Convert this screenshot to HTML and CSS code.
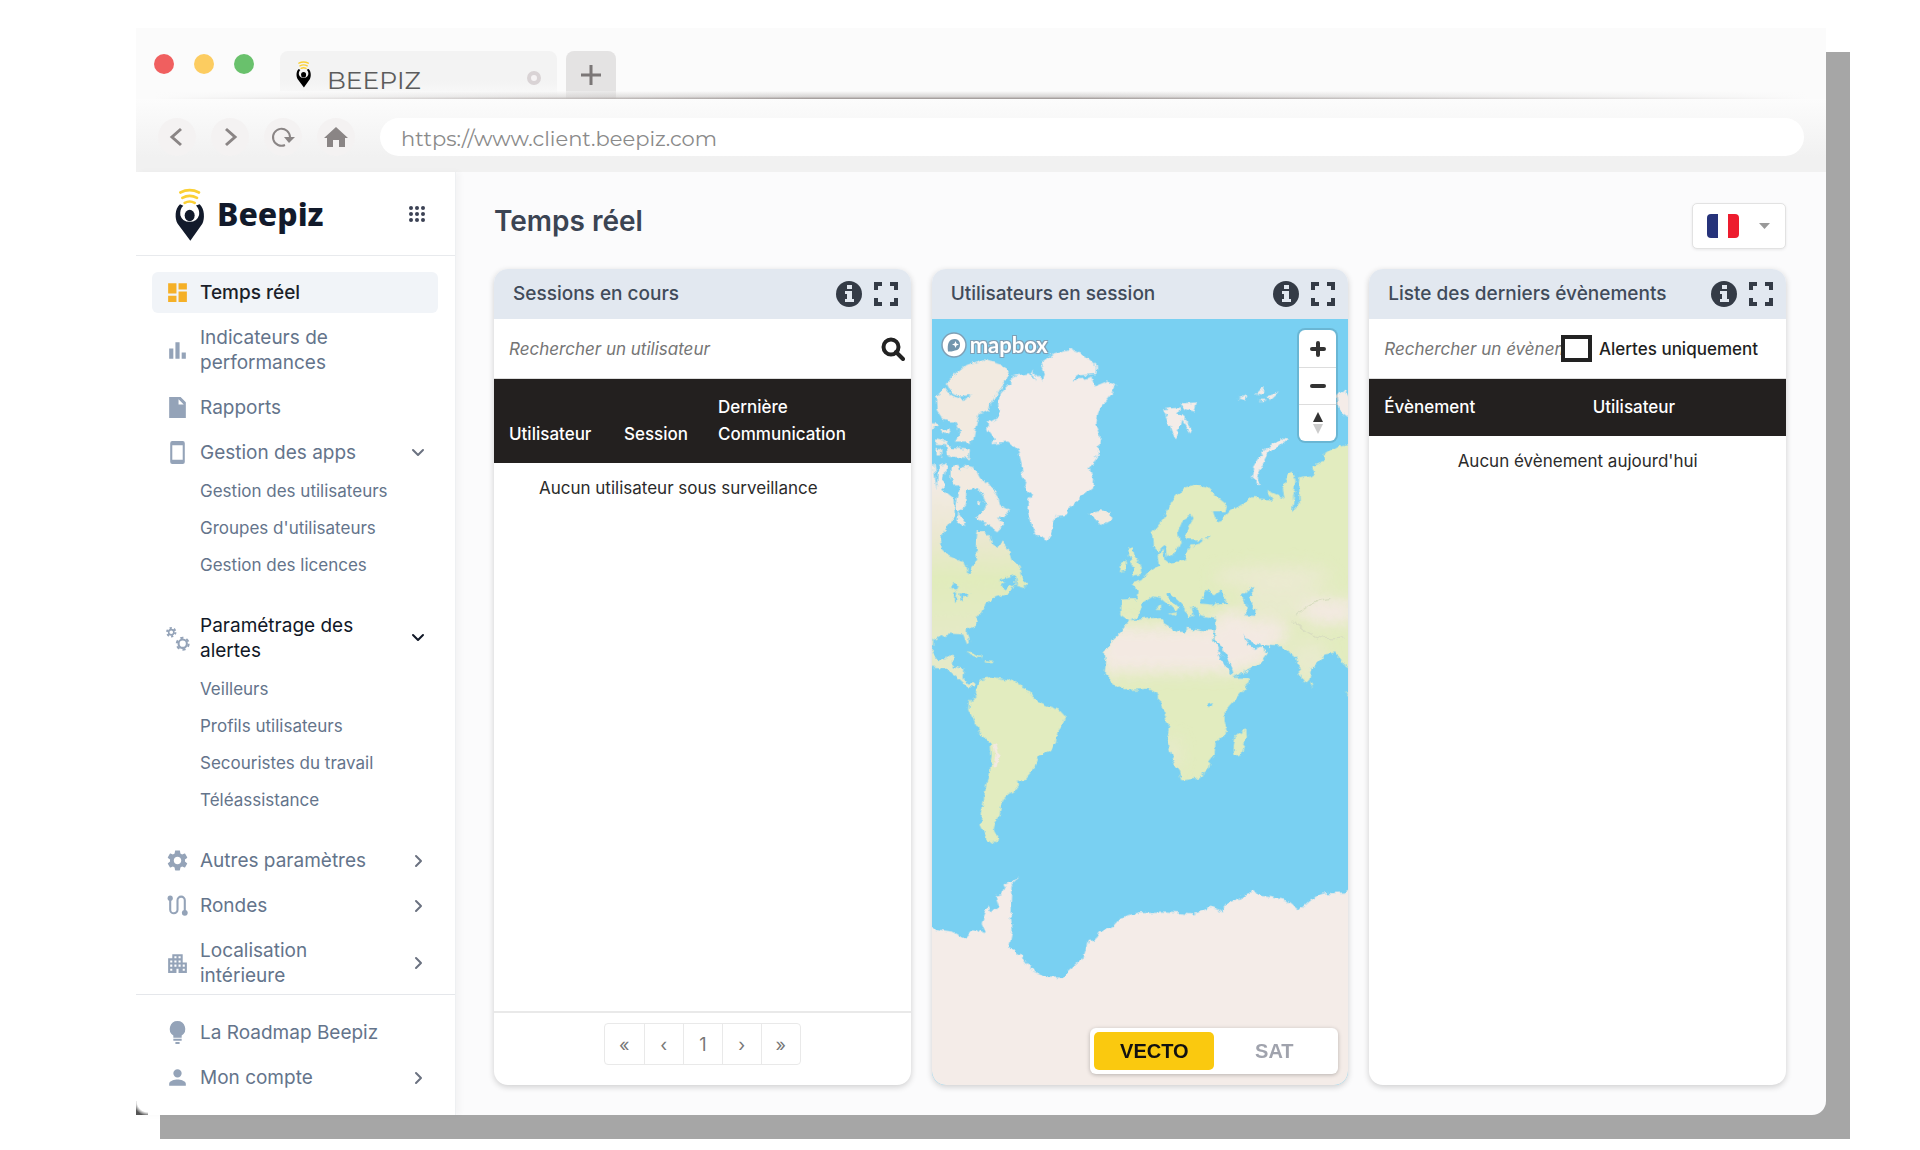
FILE: index.html
```html
<!DOCTYPE html>
<html lang="fr">
<head>
<meta charset="utf-8">
<meta name="viewport" content="width=device-width, initial-scale=1">
<title>BEEPIZ</title>
<link rel="stylesheet" href="styles.css">
</head>
<body>
<svg class="sprite" aria-hidden="true">
  <symbol id="pin" viewBox="132 465 93 167">
    <g fill="none" stroke="#fbd034" stroke-width="8" stroke-linecap="round"><path d="M151 484Q179 470 207 484"/><path d="M157 500Q179 488 201 500"/><path d="M164 515Q179 507 194 515"/></g>
    <path d="M150 519C134 532 134 563 143 578L181 629 217 578C225 563 224 532 209 519L198 523C207 532 209 545 207 552A29 27 0 0 1 151 552C150 542 151 532 160 524Z" fill="currentColor"/>
    <ellipse cx="179" cy="553" rx="15" ry="17" fill="currentColor"/>
  </symbol>
  <symbol id="down" viewBox="0 0 20 20"><path d="M5 7l5 5 5-5" fill="none" stroke="currentColor" stroke-width="2" stroke-linecap="round" stroke-linejoin="round"/></symbol>
  <symbol id="right" viewBox="0 0 20 20"><path d="M8 5l5 5-5 5" fill="none" stroke="currentColor" stroke-width="2" stroke-linecap="round" stroke-linejoin="round"/></symbol>
  <symbol id="info" viewBox="0 0 26 26"><circle cx="13" cy="13" r="13" fill="currentColor"/><path d="M11 4h5v4h-5zM9 10h7v8h2v3H9v-3h2v-5H9z" fill="#e2e8f0"/></symbol>
  <symbol id="expand" viewBox="0 0 24 24"><path d="M2 8V2h6M16 2h6v6M22 16v6h-6M8 22H2v-6" fill="none" stroke="currentColor" stroke-width="4"/></symbol>
</svg>

<div class="window">
  <header class="tabs">
    <div class="lights"><i class="light red"></i><i class="light amber"></i><i class="light green"></i></div>
    <div class="tab">
      <svg class="favicon"><use href="#pin"/></svg>
      <span class="tab-name">BEEPIZ</span>
      <button class="tab-close" aria-label="Fermer l'onglet"></button>
    </div>
    <button class="tab-new" aria-label="Nouvel onglet"><svg width="22" height="22" viewBox="0 0 22 22"><path d="M11 1v20M1 11h20" stroke="#7b7777" stroke-width="3"/></svg></button>
  </header>
  <div class="toolbar">
    <button class="tool" aria-label="Précédent"><svg viewBox="0 0 24 24"><path d="M16 4l-9 8 9 8" fill="none" stroke="currentColor" stroke-width="3"/></svg></button>
    <button class="tool" aria-label="Suivant"><svg viewBox="0 0 24 24"><path d="M8 4l9 8-9 8" fill="none" stroke="currentColor" stroke-width="3"/></svg></button>
    <button class="tool" aria-label="Recharger"><svg viewBox="0 0 24 24"><path d="M14 20A8.500 8.500 0 1 1 19 12" fill="none" stroke="currentColor" stroke-width="2"/><path d="M13 12h11l-6 6z" fill="currentColor"/></svg></button>
    <button class="tool" aria-label="Accueil"><svg viewBox="0 0 24 24"><path d="M12 2L0 13h3v9h6v-7h6v7h6v-9h3z" fill="currentColor"/></svg></button>
    <input class="address" type="text" aria-label="Adresse" value="https://www.client.beepiz.com">
  </div>

  <div class="app">
    <aside class="sidebar">
      <div class="brand">
        <svg class="brand-pin"><use href="#pin"/></svg>
        <span class="brand-name">Beepiz</span>
        <button class="apps" aria-label="Applications"><svg width="18" height="18" viewBox="0 0 18 18" fill="#3c4254"><circle cx="3" cy="3" r="2"/><circle cx="9" cy="3" r="2"/><circle cx="15" cy="3" r="2"/><circle cx="3" cy="9" r="2"/><circle cx="9" cy="9" r="2"/><circle cx="15" cy="9" r="2"/><circle cx="3" cy="15" r="2"/><circle cx="9" cy="15" r="2"/><circle cx="15" cy="15" r="2"/></svg></button>
      </div>
      <nav class="menu">
        <a class="item active" href="#"><svg class="icon" viewBox="0 0 24 24"><path d="M3 13h8V3H3v10zm0 8h8v-6H3v6zm10 0h8V11h-8v10zm0-18v6h8V3h-8z"/></svg><span>Temps réel</span></a>
        <a class="item" href="#"><svg class="icon" viewBox="0 0 24 24"><path d="M4 10h4v10H4zM10 4h4v16h-4zM16 14h4v6h-4z"/></svg><span>Indicateurs de performances</span></a>
        <a class="item" href="#"><svg class="icon" viewBox="0 0 24 24"><path d="M4 2h11l5 5v15H4zM13 4v5h5z" fill-rule="evenodd"/></svg><span>Rapports</span></a>
        <a class="item" href="#"><svg class="icon" viewBox="0 0 24 24"><path d="M7 1h10a2 2 0 0 1 2 2v18a2 2 0 0 1-2 2H7a2 2 0 0 1-2-2V3a2 2 0 0 1 2-2zM7 5v14h10V5z" fill-rule="evenodd"/></svg><span>Gestion des apps</span><svg class="chevron"><use href="#down"/></svg></a>
        <ul class="sub">
          <li><a href="#">Gestion des utilisateurs</a></li>
          <li><a href="#">Groupes d'utilisateurs</a></li>
          <li><a href="#">Gestion des licences</a></li>
        </ul>
        <a class="item open" href="#"><svg class="icon" viewBox="0 0 24 24" fill="none" stroke="#94a3b8"><circle cx="6" cy="6" r="2.500" stroke-width="1.500"/><circle cx="6" cy="6" r="4" stroke-width="2" stroke-dasharray="2.100 2.090"/><circle cx="17" cy="17" r="4" stroke-width="2"/><circle cx="17" cy="17" r="5.700" stroke-width="2" stroke-dasharray="3 2.970"/></svg><span>Paramétrage des alertes</span><svg class="chevron"><use href="#down"/></svg></a>
        <ul class="sub">
          <li><a href="#">Veilleurs</a></li>
          <li><a href="#">Profils utilisateurs</a></li>
          <li><a href="#">Secouristes du travail</a></li>
          <li><a href="#">Téléassistance</a></li>
        </ul>
        <a class="item" href="#"><svg class="icon" viewBox="0 0 24 24"><path d="M19.140 12.940c.04-.3.060-.61.060-.94 0-.32-.02-.64-.07-.94l2.030-1.580c.18-.14.230-.41.120-.61l-1.920-3.320c-.12-.22-.37-.29-.59-.22l-2.390.960c-.5-.38-1.030-.7-1.620-.94l-.36-2.540c-.04-.24-.24-.41-.48-.41h-3.840c-.24 0-.43.170-.47.410l-.36 2.540c-.59.240-1.130.570-1.620.940l-2.390-.96c-.22-.08-.47 0-.59.220L2.740 8.870c-.12.210-.08.470.120.610l2.030 1.580c-.05.300-.09.630-.09.940s.020.640.070.940l-2.030 1.580c-.18.140-.23.410-.12.610l1.920 3.320c.12.220.37.290.59.220l2.390-.96c.5.380 1.030.7 1.620.940l.36 2.540c.05.240.240.410.480.410h3.840c.24 0 .44-.17.470-.41l.36-2.540c.59-.24 1.130-.56 1.620-.94l2.390.960c.22.080.47 0 .59-.22l1.920-3.320c.12-.22.070-.47-.12-.61l-2.010-1.580zM12 15.600c-1.980 0-3.600-1.620-3.600-3.600s1.620-3.600 3.600-3.600 3.600 1.620 3.600 3.600-1.620 3.600-3.600 3.600z"/></svg><span>Autres paramètres</span><svg class="chevron"><use href="#right"/></svg></a>
        <a class="item" href="#"><svg class="icon" viewBox="0 0 24 24"><path d="M5 6v10a3.500 3.500 0 0 0 7 0V7a3.500 3.500 0 0 1 7 0v11" fill="none" stroke="currentColor" stroke-width="2"/><circle cx="5" cy="5" r="2.500"/><circle cx="19" cy="19" r="2.800"/></svg><span>Rondes</span><svg class="chevron"><use href="#right"/></svg></a>
        <a class="item" href="#"><svg class="icon" viewBox="0 0 24 24"><path d="M7 3h10v8h4v10h-8v-4h-2v4H3V7h4zM9 5v2h2V5zM13 5v2h2V5zM5 9v2h2V9zM9 9v2h2V9zM13 9v2h2V9zM5 13v2h2v-2zM9 13v2h2v-2zM13 13v2h2v-2zM17 13v2h2v-2zM5 17v2h2v-2zM17 17v2h2v-2z" fill-rule="evenodd"/></svg><span>Localisation intérieure</span><svg class="chevron"><use href="#right"/></svg></a>
      </nav>
      <nav class="menu-foot">
        <a class="item" href="#"><svg class="icon" viewBox="0 0 24 24"><path d="M12 1a7.500 7.500 0 0 0-4 13.800V17h8v-2.200A7.500 7.500 0 0 0 12 1zM8 18h8v2H8zM10 21h4v2h-4z"/></svg><span>La Roadmap Beepiz</span></a>
        <a class="item" href="#"><svg class="icon" viewBox="0 0 24 24"><path d="M12 12a4 4 0 1 0 0-8 4 4 0 0 0 0 8zm0 2c-2.670 0-8 1.340-8 4v2h16v-2c0-2.660-5.330-4-8-4z"/></svg><span>Mon compte</span><svg class="chevron"><use href="#right"/></svg></a>
      </nav>
    </aside>

    <main class="main">
      <div class="head">
        <h1>Temps réel</h1>
        <label class="lang">
          <select aria-label="Langue"><option value="fr" aria-label="Français"></option></select>
          <svg width="64" height="24" viewBox="0 0 64 24"><path d="M4 0h7v24H4a4 4 0 0 1-4-4V4a4 4 0 0 1 4-4z" fill="#26337a"/><path d="M21 0h7a4 4 0 0 1 4 4v16a4 4 0 0 1-4 4h-7z" fill="#ed1c2e"/><path d="M52 9h11l-5.500 6z" fill="#999"/></svg>
        </label>
      </div>

      <div class="cards">
        <section class="card">
          <div class="card-head"><h2>Sessions en cours</h2><button aria-label="Informations"><svg width="26" height="26"><use href="#info"/></svg></button><button aria-label="Agrandir"><svg width="24" height="24"><use href="#expand"/></svg></button></div>
          <div class="search">
            <input type="text" aria-label="Rechercher un utilisateur" placeholder="Rechercher un utilisateur">
            <button aria-label="Rechercher"><svg width="24" height="24" viewBox="0 0 24 24"><circle cx="10" cy="10" r="7.500" fill="none" stroke="#222" stroke-width="4"/><path d="M15 15l7 7" stroke="#222" stroke-width="4" stroke-linecap="round"/></svg></button>
          </div>
          <table class="sessions">
            <thead><tr><th class="c-user">Utilisateur</th><th class="c-session">Session</th><th>Dernière<br>Communication</th></tr></thead>
            <tbody><tr><td colspan="3">Aucun utilisateur sous surveillance</td></tr></tbody>
          </table>
          <div class="pager"><div class="pages">
            <button>«</button><button>‹</button><button>1</button><button>›</button><button>»</button>
          </div></div>
        </section>

        <section class="card">
          <div class="card-head"><h2>Utilisateurs en session</h2><button aria-label="Informations"><svg width="26" height="26"><use href="#info"/></svg></button><button aria-label="Agrandir"><svg width="24" height="24"><use href="#expand"/></svg></button></div>
          <div class="map">
            <svg class="world" viewBox="36 207 1252 2301" preserveAspectRatio="xMidYMid slice" role="img" aria-label="Carte du monde">
              <defs>
                <filter id="coast" x="0" y="200" width="1300" height="2320" filterUnits="userSpaceOnUse"><feTurbulence type="fractalNoise" baseFrequency=".045" numOctaves="3" seed="4"/><feDisplacementMap in="SourceGraphic" scale="20" xChannelSelector="R" yChannelSelector="G"/></filter>
                <filter id="soft" x="-30%" y="-30%" width="160%" height="160%"><feGaussianBlur stdDeviation="22"/></filter>
                <linearGradient id="canada" x1="0" y1="700" x2="0" y2="1180" gradientUnits="userSpaceOnUse"><stop offset="0" stop-color="#f3ebe4"/><stop offset=".35" stop-color="#ebe8d0"/><stop offset=".6" stop-color="#e1ecbc"/><stop offset="1" stop-color="#e6eac8"/></linearGradient>
                <clipPath id="east">
                  <path d="M605 1050L650 1048 654 1020 635 1002 668 992 690 965 720 945 716 905 700 890 697 850 730 810 760 750 790 715 830 703 860 710 885 735 922 765 918 785 880 785 890 815 905 812 935 780 960 770 1000 745 1060 750 1040 720 1095 745 1090 720 1100 675 1118 665 1128 690 1120 750 1135 720 1140 685 1175 680 1190 670 1178 650 1215 635 1212 615 1250 590 1300 580V1260L1270 1240 1250 1208 1215 1215 1175 1255 1170 1290 1158 1302 1140 1270 1130 1220 1105 1205 1090 1190 1050 1188 1010 1182 1045 1210 1020 1245 945 1280 920 1220 885 1165 890 1145 890 1108 840 1100 830 1075 815 1075 822 1095 805 1100 795 1080 780 1060 748 1032 740 1040 778 1072 770 1085 755 1070 725 1045 700 1040 670 1060 655 1100 630 1112 605 1095Z"/>
                  <path d="M628 1112L660 1110 728 1102 732 1122 770 1145 792 1150 800 1135 850 1145 882 1147 880 1170 905 1210 925 1250 940 1268 945 1285 990 1285 985 1305 950 1345 915 1385 915 1415 922 1450 888 1480 885 1515 870 1535 865 1560 835 1585 785 1590 775 1560 758 1525 740 1470 750 1430 740 1400 722 1365 720 1335 690 1318 610 1322 580 1300 555 1272 560 1240 556 1210 580 1170 602 1150Z"/>
                </clipPath>
              </defs>
              <rect x="0" y="200" width="1300" height="2320" fill="#79d0f2"/>
              <g filter="url(#coast)">
                <g fill="#f4ece8">
                  <path d="M362 340L400 310 450 298 500 320 532 350 530 372 480 376 455 392 500 385 515 380 524 410 560 395 588 405 575 430 550 460 535 490 530 520 542 560 535 610 525 640 510 655 520 690 518 715 480 745 450 775 440 795 408 800 400 830 385 872 350 855 335 825 322 790 325 750 340 735 315 715 320 695 308 680 305 640 295 600 265 575 215 580 222 565 203 540 200 522 240 500 235 465 240 430 270 400 280 378 330 370 345 390 335 362 370 395 375 370Z"/>
                  <path d="M730 475L755 472 780 470 772 490 790 500 815 535 810 545 785 510 770 568 755 540 745 510ZM780 460L832 458 825 485 790 475ZM955 445L985 432 975 452ZM1012 430L1032 410 1030 435ZM1040 440L1078 428 1055 450ZM1015 450H1040L1025 458Z"/>
                  <path d="M1000 690L1005 650 1030 605 1085 565 1102 570 1075 595 1045 610 1025 650 1010 680 1025 705ZM1255 440L1275 420 1300 460V510L1260 480Z"/>
                  <path d="M20 2030L60 2042 100 2048 135 2068 160 2040 200 2055 185 2020 205 1970 215 1990 235 1970 225 1940 245 1935 260 1905 295 1887 275 1910 272 1990 278 2040 268 2095 300 2115 345 2170 380 2185 432 2185 445 2165 490 2125 505 2075 525 2075 540 2050 580 2028 600 2005 655 1992 740 1990 820 1995 875 1972 910 1986 930 1960 1000 1925 1025 1940 1100 1952 1140 1985 1180 1948 1215 1932 1275 1930 1300 1915V2530H20Z"/>
                </g>
                <g fill="#f2eae0">
                  <path d="M80 400L110 370 140 345 190 328 250 345 270 370 255 400 225 440 205 480 180 490 170 520 160 575 105 575 120 545 105 520 70 510 50 480 48 440 75 415 90 435 130 450 155 435 120 440 95 430Z"/>
                  <path d="M75 570L95 595 150 600 148 625 85 620ZM25 500L52 530 25 540ZM48 565L80 573 75 583 48 582ZM50 595H64V620H50ZM60 540L85 538 90 550 70 552Z"/>
                  <path d="M92 650L115 645 122 665 130 648 165 655 180 685 210 705 235 740 240 765 268 780 255 805 235 800 250 830 235 845 205 825 165 805 190 790 200 765 190 735 165 715 140 720 135 770 115 790 105 770 118 715 92 690ZM115 790L140 825 112 820ZM170 755L185 752 180 768Z"/>
                  <path d="M510 790L540 785 572 790 575 810 545 827 525 810Z"/>
                </g>
                <path fill="url(#canada)" d="M55 645L80 640 72 690 70 720 100 745 105 800 85 825 62 860 65 895 85 915 130 935 140 965 152 972 158 945 172 930 165 890 170 845 190 843 215 865 220 885 235 893 245 872 265 900 275 930 300 950 302 975 322 1008 318 1014 285 1005 275 1028 245 1038 225 1042 190 1070 175 1100 160 1130 143 1142 150 1180 142 1185 130 1155 90 1152 60 1160 40 1172 38 1210 55 1232 80 1232 85 1218 102 1220 98 1250 130 1257 128 1285 145 1302 165 1300 160 1312 140 1308 110 1280 75 1255 20 1250V640H40L50 720Z"/>
                <g fill="#e2ecbf">
                  <path d="M172 1305L180 1290 210 1282 265 1290 325 1320 345 1350 385 1370 420 1380 438 1400 430 1425 412 1450 408 1480 395 1500 360 1515 345 1555 315 1590 295 1592 298 1615 265 1635 250 1650 245 1670 238 1700 225 1720 222 1740 238 1770 222 1782 200 1765 182 1730 188 1670 195 1630 205 1580 215 1520 212 1480 180 1450 160 1410 148 1385 150 1355 168 1335Z"/>
                  <path d="M625 900L640 892 645 920 665 950 668 972 635 980 645 955 630 925ZM605 945L622 930 620 962 600 968ZM980 1438L982 1460 965 1518 945 1522 942 1495 948 1460ZM135 1205L160 1208 188 1225 165 1220ZM198 1228L218 1232 215 1238 198 1236ZM1172 1295L1184 1305 1178 1315ZM714 1068L724 1062V1080L716 1082ZM748 1092L772 1088 762 1098ZM1275 1325L1300 1340 1285 1335Z"/>
                </g>
                <g clip-path="url(#east)">
                  <rect x="500" y="560" width="800" height="1060" fill="#e2ecbf"/>
                  <g filter="url(#soft)" fill="#f3e9e2">
                    <path d="M540 1130H1060V1230L960 1270H540Z"/><ellipse cx="940" cy="1130" rx="60" ry="50"/><ellipse cx="1230" cy="1085" rx="90" ry="40"/><ellipse cx="1040" cy="1145" rx="70" ry="40"/><ellipse cx="1060" cy="980" rx="180" ry="34" opacity=".5"/><ellipse cx="1090" cy="1050" rx="120" ry="50" opacity=".4"/><ellipse cx="1170" cy="1230" rx="60" ry="60" opacity=".4"/><ellipse cx="760" cy="1510" rx="24" ry="50" opacity=".4"/>
                  </g>
                  <path d="M1120 1110Q1180 1180 1270 1165M1130 1100Q1180 1050 1230 1050" fill="none" stroke="#d8ddc0" stroke-width="4"/>
                </g>
                <path d="M220 1480Q240 1510 225 1550" fill="none" stroke="#f3e9e2" stroke-width="10"/>
                <g fill="#79d0f2">
                  <path d="M700 900L715 903 736 885 742 925 765 915 780 880 775 845 790 810 815 795 822 805 805 835 800 868 850 870 845 878 815 885 800 910 798 932 745 940 735 932 728 900 715 915ZM855 860H872L868 870Z"/>
                  <path d="M845 1050L860 1020 885 1035 905 1020 912 1040 928 1062 880 1065 845 1062ZM965 1035L1000 1015V1030L985 1045 1005 1075 1003 1102 980 1100 978 1065ZM882 1170L895 1180 925 1225 942 1272 932 1270 905 1225ZM972 1155L990 1175 1020 1182 1010 1198 985 1190Z"/>
                  <path d="M85 1010L100 1000 120 1012 108 1020ZM103 1030L112 1025 108 1060 102 1055ZM118 1028L148 1030 145 1042 128 1038 130 1055 122 1050ZM235 990L285 975 288 1002 258 1018 242 1008 256 995ZM1120 785L1138 765 1135 670 1128 730ZM865 1362L880 1358 876 1370 866 1372ZM740 1032L750 1030 785 1062 778 1070 745 1045Z"/>
                </g>
              </g>
            </svg>
            <div class="mapbox"><svg width="26" height="26" viewBox="0 0 26 26"><circle cx="13" cy="13" r="12" fill="#fff" stroke="#7f9fb5" stroke-width="1.500"/><path d="M7 19.500c-1-8 1-12.500 7-12.500a5.800 5.800 0 0 1 0 11.500c-2 1-5 1-7 1z" fill="#7295ad"/><path d="M14.500 9l1 2.500L18 12.500l-2.500 1-1 2.500-1-2.500-2.500-1 2.500-1z" fill="#fff"/></svg><span>mapbox</span></div>
            <div class="zoom">
              <button aria-label="Zoomer"><svg width="16" height="16" viewBox="0 0 16 16"><path d="M8 2v12M2 8h12" stroke="#333" stroke-width="4" stroke-linecap="round"/></svg></button>
              <button aria-label="Dézoomer"><svg width="16" height="16" viewBox="0 0 16 16"><path d="M2 8h12" stroke="#333" stroke-width="4" stroke-linecap="round"/></svg></button>
              <button aria-label="Réorienter"><svg width="12" height="22" viewBox="0 0 12 22"><path d="M6 0l5 10H1z" fill="#333"/><path d="M6 22l5-10H1z" fill="#ccc"/></svg></button>
            </div>
            <div class="layers"><button class="on">VECTO</button><button>SAT</button></div>
          </div>
        </section>

        <section class="card">
          <div class="card-head"><h2>Liste des derniers évènements</h2><button aria-label="Informations"><svg width="26" height="26"><use href="#info"/></svg></button><button aria-label="Agrandir"><svg width="24" height="24"><use href="#expand"/></svg></button></div>
          <div class="search events-search">
            <input type="text" aria-label="Rechercher un évènement" placeholder="Rechercher un évènement">
            <label class="alerts"><input type="checkbox">Alertes uniquement</label>
          </div>
          <table class="events">
            <thead><tr><th>Évènement</th><th>Utilisateur</th></tr></thead>
            <tbody><tr><td colspan="2">Aucun évènement aujourd'hui</td></tr></tbody>
          </table>
        </section>
      </div>
    </main>
  </div>
</div>
</body>
</html>
```
FILE: styles.css
```css
* { box-sizing: border-box; }

body {
  margin: 0;
  min-height: 100vh;
  display: flex;
  padding: 28px 94px 35px 136px;
  background: #fff;
  font-family: Inter, "Liberation Sans", sans-serif;
  font-size: 17px;
  color: #2b2b2b;
}

button { border: 0; padding: 0; margin: 0; background: none; font: inherit; color: inherit; display: flex; align-items: center; justify-content: center; }
a { color: inherit; text-decoration: none; }
.sprite { display: none; }

.window {
  position: relative;
  z-index: 0;
  flex: 1;
  min-width: 0;
  display: flex;
  flex-direction: column;
}
/* Hard offset shadow behind the window */
.window::before {
  content: "";
  position: absolute;
  z-index: -1;
  inset: 24px -24px -24px 24px;
  background: #a6a6a6;
}
/* Dark notch in the bottom left corner */
.window::after {
  content: "";
  position: absolute;
  left: 0;
  bottom: 0;
  width: 12px;
  height: 14px;
  background: radial-gradient(circle at 100% 0, transparent 11px, #555 15px);
}

/* Browser chrome */
.tabs { position: relative; display: flex; align-items: flex-end; height: 71px; padding-left: 18px; background: #fbfbfb; }
.tabs::after {
  content: "";
  position: absolute;
  left: 18px;
  right: 18px;
  bottom: 0;
  height: 8px;
  background: linear-gradient(to right, #fbfbfb, transparent 40%, transparent 55%, #fbfbfb), linear-gradient(transparent, #a29c9a66 70%, #9a9290);
}
.lights { display: flex; gap: 20px; align-self: center; width: 126px; }
.light { width: 20px; height: 20px; border-radius: 50%; }
.red { background: #f05f5f; }
.amber { background: #fccc60; }
.green { background: #69c16c; }
.tab { display: flex; align-items: center; width: 277px; height: 48px; padding: 0 15px; border-radius: 8px 8px 0 0; background: linear-gradient(#f3f3f3 60%, #fafafa); }
.favicon { width: 17px; height: 28px; color: #000; align-self: flex-start; margin-top: 9px; }
.tab-name { flex: 1; padding: 10px 0 0 15px; font-family: Montserrat, Lato, sans-serif; font-size: 25px; line-height: 30px; color: #5c5c5c; }
.tab-close { width: 14px; height: 14px; border: 4px solid #d9d3d5; border-radius: 50%; background: #f6f3f4; margin: 6px 1px 0 0; }
.tab-new { width: 50px; height: 48px; margin-left: 9px; border-radius: 8px 8px 0 0; background: #e4e3e3; }

.toolbar { display: flex; align-items: center; height: 73px; padding: 2px 22px 0; background: linear-gradient(#fcfcfc, #f1f1f1 80%); }
.tool { width: 38px; height: 38px; margin-right: 15px; border-radius: 50%; background: #f4f2f2; color: #8a8585; }
.tool svg { width: 24px; height: 24px; }
.address { flex: 1; min-width: 0; height: 38px; margin-left: 10px; padding: 4px 21px 0; border: 0; border-radius: 19px; background: #fff; font-family: Montserrat, Lato, sans-serif; font-size: 21px; color: #8a8a8a; }

/* Layout */
.app { flex: 1; display: flex; }
.sidebar { position: relative; width: 320px; flex: none; display: flex; flex-direction: column; background: #fff; border-right: 1px solid #eef0f2; box-shadow: 4px 0 6px #00000008; }
.brand { display: flex; align-items: center; height: 84px; padding: 0 29px 0 38px; border-bottom: 1px solid #e8eaed; }
.brand-pin { width: 31px; height: 56px; color: #121a2b; }
.brand-name { flex: 1; padding-left: 12px; font-family: "Noto Sans", sans-serif; font-weight: 800; font-size: 32px; line-height: 40px; color: #121a2b; }

.menu { flex: 1 1 0; overflow: hidden; padding: 16px 17px 0 16px; display: flex; flex-direction: column; gap: 4px; }
.menu-foot { display: flex; flex-direction: column; gap: 4px; padding: 17px 17px 17px 16px; border-top: 1px solid #e5e7eb; }
.item { display: flex; flex: none; align-items: center; padding: 8px 10px 8px 13px; border-radius: 6px; font-size: 19px; line-height: 25px; color: #64748b; }
.item > span { flex: 1; padding: 0 24px 0 10px; }
.item.active { background: #f1f4f8; color: #1b1f2a; font-weight: 500; }
.item.active .icon { color: #f5b027; }
.item.open { color: #111827; }
.icon { width: 25px; height: 25px; color: #94a3b8; fill: currentColor; flex: none; }
.icon[fill="none"] { fill: none; }
.chevron { width: 20px; height: 20px; flex: none; }
.item .chevron { color: #6b7280; }
.item.open .chevron { color: #111827; }
.sub { list-style: none; margin: -4px 0 17px; padding: 0 0 0 48px; font-size: 17px; line-height: 37px; color: #64748b; }
.sub a { display: block; }

.main { flex: 1; min-width: 0; display: flex; flex-direction: column; padding: 31px 40px 30px 38px; border-radius: 0 0 14px 0; background: #fbfbfc; }
.head { display: flex; justify-content: space-between; height: 66px; }
h1 { margin: 0; font-size: 28px; line-height: 37px; font-weight: 600; color: #3b4453; }
.lang { display: grid; width: 94px; height: 46px; align-items: center; justify-items: center; }
.lang > * { grid-area: 1 / 1; }
.lang select { appearance: none; width: 100%; height: 100%; border: 1px solid #e2e2e2; border-radius: 5px; background: #fff; box-shadow: 0 1px 3px #00000014; }
.lang svg { pointer-events: none; }

.cards { flex: 1; display: grid; grid-template-columns: repeat(3, minmax(0, 1fr)); gap: 21px; }
.card { display: flex; flex-direction: column; overflow: hidden; border-radius: 14px; background: #fff; box-shadow: 0 2px 6px #0000002e; }
.card-head { display: flex; align-items: center; height: 50px; padding: 0 13px 0 19px; gap: 12px; background: #e2e8f0; color: #343b46; }
h2 { flex: 1; margin: 0; font-size: 19px; line-height: 26px; font-weight: 500; color: #414b5a; white-space: nowrap; }
.search { display: flex; align-items: center; height: 60px; padding: 0 6px 0 15px; border-bottom: 1px solid #ddd; }
.search input[type="text"] { flex: 1; min-width: 0; padding: 0; border: 0; background: none; font: inherit; font-style: italic; }
.search input::placeholder { color: #757575; opacity: 1; }
.events-search { padding-right: 28px; }
.alerts { display: flex; align-items: center; gap: 7px; font-weight: 500; color: #1f1f1f; white-space: nowrap; }
.alerts input { appearance: none; width: 31px; height: 27px; margin: 0; border: 4px solid #222; background: #fff; }

table { width: 100%; border-collapse: collapse; line-height: 27px; }
thead { background: #23201f; color: #fff; }
th { padding: 15px 0 15px 15px; font-weight: 500; text-align: left; vertical-align: bottom; }
td { padding: 12px 0; text-align: center; }
.c-user { width: 115px; }
.c-session { width: 94px; }
.sessions td { padding-right: 48px; }
.events th { width: 50%; }

.pager { margin-top: auto; height: 74px; padding-top: 10px; display: flex; justify-content: center; align-items: flex-start; border-top: 2px solid #e9e9e9; }
.pages { display: flex; height: 42px; border: 1px solid #e9e9e9; border-radius: 4px; color: #777; font-size: 18px; }
.pages button { width: 39px; }
.pages button + button { border-left: 1px solid #e9e9e9; }

/* Map */
.map { position: relative; flex: 1; overflow: hidden; background: #79d0f2; }
.world { position: absolute; inset: 0; width: 100%; height: 100%; }
.mapbox { position: absolute; left: 9px; top: 13px; display: flex; align-items: center; gap: 3px; font-family: Lato, sans-serif; font-weight: 700; font-size: 22px; line-height: 26px; color: #fff; }
.mapbox span { text-shadow: 1px 1px 0 #7f9fb5, -1px -1px 0 #7f9fb5, 1px -1px 0 #7f9fb5, -1px 1px 0 #7f9fb5; }
.zoom { position: absolute; right: 12px; top: 11px; width: 37px; border-radius: 6px; background: #fff; box-shadow: 0 0 0 2px #0000001f; }
.zoom button { width: 37px; height: 37px; }
.zoom button + button { border-top: 1px solid #ddd; }
.layers { position: absolute; right: 10px; bottom: 11px; display: flex; padding: 4px; border-radius: 6px; background: #fff; box-shadow: 0 1px 4px #00000040; font-family: "Liberation Sans", sans-serif; font-weight: 700; font-size: 20px; color: #a0a3ad; }
.layers button { width: 120px; height: 38px; border-radius: 5px; }
.layers .on { background: #fac90f; color: #111; }
```
